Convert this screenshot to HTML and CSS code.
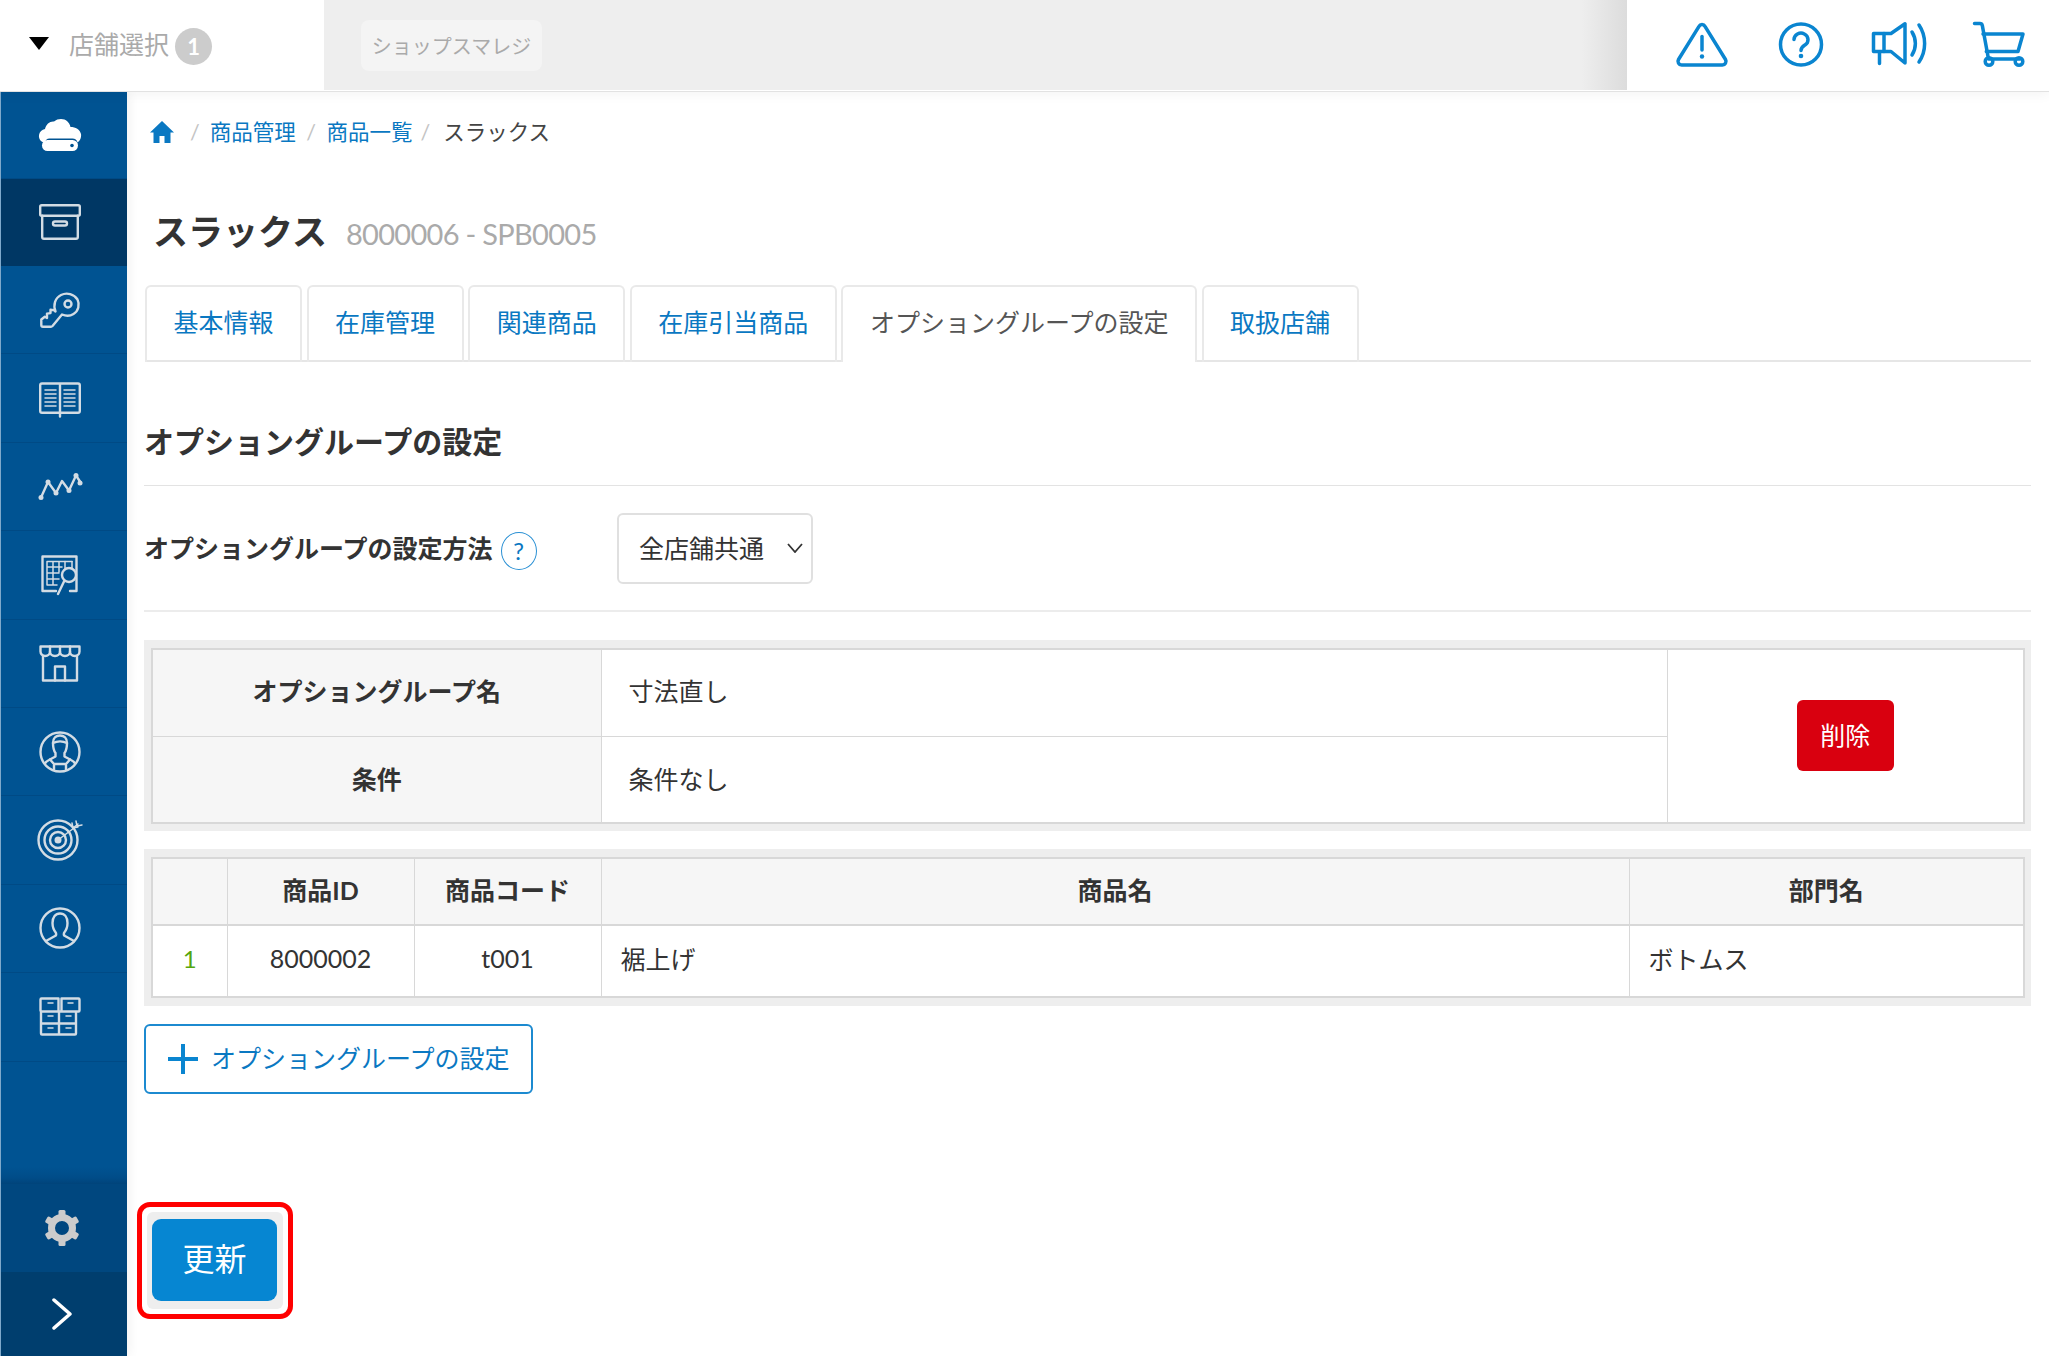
FILE: index.html
```html
<!DOCTYPE html>
<html lang="ja">
<head>
<meta charset="utf-8">
<title>スラックス</title>
<link rel="stylesheet" href="styles.css">
</head>
<body>
<div class="app">
  <header class="topbar">
    <div class="store-select">
      <span class="caret"></span>
      <span class="store-label">店舗選択</span>
      <span class="store-badge">1</span>
    </div>
    <div class="shop-area"><span class="shop-chip">ショップスマレジ</span></div>
    <div class="top-icons">
      <svg class="ti ti-warn" viewBox="0 0 52 45"><path d="M26 2.5c1.3 0 2.4.7 3 1.8L49.500 37.500c1.400 2.400-.3 5.500-3.100 5.500H5.600c-2.800 0-4.500-3.100-3.100-5.500L23 4.300c.6-1.100 1.700-1.800 3-1.800z"/><path d="M26 14.500V28"/><circle class="fillc" cx="26" cy="34.500" r="2.200"/></svg>
      <svg class="ti ti-q" viewBox="0 0 46 45"><circle cx="23" cy="22.500" r="20.500"/><path d="M16 17.500a7 6.500 0 1 1 11 5.500c-2.500 1.600-4 2.500-4 5.500"/><circle class="fillc" cx="23" cy="34" r="2.300"/></svg>
      <svg class="ti ti-mega" viewBox="0 0 58 43"><path d="M1.500 11.500H19L33 1.800V41L19 29.500H1.500z"/><path d="M12 11.500v18M7.500 30v11.500"/><path d="M40 10c4.500 7 4.500 16 0 23M47 3c7.500 11 7.500 26 0 37"/></svg>
      <svg class="ti ti-cart" viewBox="0 0 52 45"><path d="M1.500 1.500H7c1.200 0 2 .7 2.300 1.900L15.500 37H47"/><path d="M10 12h40l-5 17.500H13.300"/><circle cx="16" cy="39.500" r="3.800"/><circle cx="46" cy="39.500" r="3.800"/></svg>
    </div>
  </header>

  <div class="body-row">
    <nav class="sidebar">
      <a class="side-item side-short">
        <svg class="si si-cloud" viewBox="0 0 44 32"><path class="fillc" d="M7 24C2.500 23 .5 19.500 1 16c.5-3.500 3-5.500 6-6 1-5 5-8 9-7.500C18 .8 20.500 0 23 0c5 0 8.500 3.500 9.500 8 5 0 9.500 2.500 10.500 7 .6 3.500-1 7-3.500 8.500-.5-2.500-2.500-4-5-4H11.500C9 19.500 7 21.500 7 24z"/><rect class="fillc" x="4" y="21" width="36" height="11" rx="5.500"/><circle class="dot-hole" cx="34" cy="26.500" r="1.800"/></svg>
      </a>
      <a class="side-item side-short side-active">
        <svg class="si si-box" viewBox="0 0 42 36"><rect x="1.200" y="1.200" width="39.600" height="10.500" rx="1.500"/><path d="M3.200 11.700V33c0 1 .8 1.800 1.800 1.800h32c1 0 1.800-.8 1.800-1.800V11.700"/><rect x="14" y="17.500" width="14" height="4" rx="2"/></svg>
      </a>
      <a class="side-item">
        <svg class="si si-key" viewBox="0 0 40 36"><path d="M15.500 19.500C13 13 15 6 21 3c6-3 13-.8 16.500 4.500 2.500 5 1 11.500-4 14.500-4 2.500-8 2-11.500.5L12.500 34c-.5.5-1 .7-1.500.7H3c-1 0-1.700-.8-1.700-1.700v-5.500l3.500-2.800 2.200 1.200v-4.300l3.500-.5v-3.300l3.500.3z"/><circle cx="28" cy="12" r="3.500"/></svg>
      </a>
      <a class="side-item">
        <svg class="si si-book" viewBox="0 0 42 37"><path d="M21 3.500H3c-1 0-1.800.8-1.800 1.800V31c0 1 .8 1.800 1.800 1.800h36c1 0 1.800-.8 1.800-1.800V5.300c0-1-.8-1.800-1.800-1.800H21v33"/><path class="thin" d="M6 10h11M6 14h11M6 18h11M6 22h11M6 26h11M25 10h11M25 14h11M25 18h11M25 22h11M25 26h11"/></svg>
      </a>
      <a class="side-item">
        <svg class="si si-chart" viewBox="0 0 44 30"><path d="M3 26.500 10 11l8 11 6-12 7 9.500 7-15 5 7.500"/><circle class="fillc" cx="3" cy="26.500" r="2.500"/><circle class="fillc" cx="10" cy="11" r="2.500"/><circle class="fillc" cx="18" cy="22" r="2.500"/><circle class="fillc" cx="31" cy="19.500" r="2.500"/><circle class="fillc" cx="38" cy="4.500" r="2.500"/><circle class="fillc" cx="42" cy="12" r="2.500"/></svg>
      </a>
      <a class="side-item">
        <svg class="si si-report" viewBox="0 0 38 40"><path d="M15 36H1.500V1.500h34V36H29"/><path class="thin" d="M6 6.500h25M6 6.500V30h10M12 6.500V30M18 6.500V17M6 12h15M6 18h12M6 24h12"/><path class="thin" d="M24 6.500v7M31 6.500v6"/><circle cx="28" cy="20" r="7"/><path d="m23 26.500-6 12.500"/></svg>
      </a>
      <a class="side-item">
        <svg class="si si-store" viewBox="0 0 42 37"><path d="M1.500 1.500h39v5c0 2.500-2 4.500-4.800 4.500S31 9 31 6.500c0 2.500-2 4.500-5 4.500s-5-2-5-4.500c0 2.500-2 4.500-5 4.500s-5-2-5-4.500C11 9 9 11 6.200 11S1.500 9 1.500 6.500z"/><path d="M11 1.500v5M21 1.500v5M31 1.500v5"/><path d="M4 11v24.500h34V11"/><path d="M16 35.500V21.500h10v14"/></svg>
      </a>
      <a class="side-item">
        <svg class="si si-person" viewBox="0 0 42 42"><circle cx="21" cy="21" r="19.500"/><path d="M14 12c0-5 3-7.500 7-7.500s7 2.500 7 7.500c0 5-1 8-2.500 10v3.500L32 29c2 1 3.500 2 4 3.500M14 12c0 5 1 8 2.500 10v3.500L10 29c-2 1-3.500 2-4 3.500"/><path d="M14 12c4-2 10-2 14 0"/><path d="M11 28.500 15 33h12l4-4.500M15 33v5M27 33v5"/></svg>
      </a>
      <a class="side-item">
        <svg class="si si-target" viewBox="0 0 46 42"><circle cx="21" cy="21" r="19.500"/><circle cx="21" cy="21" r="13.500"/><circle cx="21" cy="21" r="8"/><circle class="fillc" cx="21" cy="21" r="3.500"/><path class="thin" d="M21 21 37 9"/><path class="thin" d="m35 4 1 5 5-1M39 2l1 5 5-1M36 9l5-4"/></svg>
      </a>
      <a class="side-item">
        <svg class="si si-user" viewBox="0 0 42 42"><circle cx="21" cy="21" r="19.500"/><path d="M7 34l9-5c1-.5 1.500-1.200 1-3-2-2.500-3.500-6-3.500-10 0-6 3-9.500 7.500-9.500S28.500 10 28.500 16c0 4-1.500 7.500-3.500 10-.5 1.800 0 2.500 1 3l9 5"/></svg>
      </a>
      <a class="side-item">
        <svg class="si si-grid" viewBox="0 0 42 39"><path d="M1.500 2.500c0-.6.400-1 1-1h17v13H2.500c-.6 0-1-.4-1-1zM22.500 1.500h17c.6 0 1 .4 1 1v11c0 .6-.4 1-1 1h-17zM2 14.500h18v12H2zM20 14.500h17v12H20zM2 26.500h18v11H3c-.6 0-1-.4-1-1zM20 26.500h17v10c0 .6-.4 1-1 1H20z"/><path class="thin" d="M9 6h5M29 6h5M9 19h5M27 19h5M9 31h5M27 31h5"/></svg>
      </a>
      <div class="side-fill"></div>
      <a class="side-gear">
        <svg class="gear" viewBox="0 0 36 36"><circle class="gear-ring" cx="18" cy="18" r="10.500"/><rect class="gear-tooth" x="14.500" y="0" width="7" height="8" rx="1.500"/><rect class="gear-tooth" x="14.500" y="0" width="7" height="8" rx="1.500" transform="rotate(60 18 18)"/><rect class="gear-tooth" x="14.500" y="0" width="7" height="8" rx="1.500" transform="rotate(120 18 18)"/><rect class="gear-tooth" x="14.500" y="0" width="7" height="8" rx="1.500" transform="rotate(180 18 18)"/><rect class="gear-tooth" x="14.500" y="0" width="7" height="8" rx="1.500" transform="rotate(240 18 18)"/><rect class="gear-tooth" x="14.500" y="0" width="7" height="8" rx="1.500" transform="rotate(300 18 18)"/></svg>
      </a>
      <a class="side-toggle">
        <svg class="chev" viewBox="0 0 20 32"><path d="M2 2l16 14L2 30"/></svg>
      </a>
    </nav>

    <main class="main">
      <ol class="crumbs">
        <li class="crumb-home"><svg class="home" viewBox="0 0 24 22"><path d="M12 0 0 11.500h3.500V22h6v-7h5v7h6V11.500H24z"/></svg></li>
        <li class="sep sep-first">/</li>
        <li><a class="link">商品管理</a></li>
        <li class="sep sep-wide">/</li>
        <li><a class="link">商品一覧</a></li>
        <li class="sep">/</li>
        <li class="crumb-current">スラックス</li>
      </ol>

      <div class="title-row">
        <h1 class="title">スラックス</h1>
        <span class="subtitle">8000006 - SPB0005</span>
      </div>

      <ul class="tabs">
        <li class="tab">基本情報</li>
        <li class="tab">在庫管理</li>
        <li class="tab">関連商品</li>
        <li class="tab">在庫引当商品</li>
        <li class="tab tab-active">オプショングループの設定</li>
        <li class="tab">取扱店舗</li>
      </ul>

      <h2 class="section-title">オプショングループの設定</h2>

      <div class="method-row">
        <div class="method-label">
          <span class="method-text">オプショングループの設定方法</span>
          <span class="help">?</span>
        </div>
        <div class="select-box">
          <span class="select-text">全店舗共通</span>
          <svg class="select-chev" viewBox="0 0 16 10"><path d="M1 1l7 8 7-8"/></svg>
        </div>
      </div>

      <div class="panel panel-first">
        <table class="grid grid-a">
          <colgroup><col class="ca1"><col class="ca2"><col class="ca3"></colgroup>
          <tr>
            <th>オプショングループ名</th>
            <td class="pad-a">寸法直し</td>
            <td class="action" rowspan="2"><button class="btn-delete">削除</button></td>
          </tr>
          <tr class="row-low">
            <th>条件</th>
            <td class="pad-a">条件なし</td>
          </tr>
        </table>
      </div>

      <div class="panel panel-second">
        <table class="grid grid-b">
          <colgroup><col class="cb1"><col class="cb2"><col class="cb2"><col class="cb3"><col class="cb4"></colgroup>
          <tr class="head-row">
            <th></th><th>商品ID</th><th>商品コード</th><th>商品名</th><th>部門名</th>
          </tr>
          <tr class="body-line">
            <td class="num">1</td>
            <td class="center">8000002</td>
            <td class="center">t001</td>
            <td class="pad-b">裾上げ</td>
            <td class="pad-b">ボトムス</td>
          </tr>
        </table>
      </div>

      <button class="btn-add">
        <svg class="plus" viewBox="0 0 30 30"><path d="M15 0v30M0 15h30"/></svg>
        <span>オプショングループの設定</span>
      </button>

      <div class="footer-bar">
        <button class="btn-update">更新</button>
        <span class="annotation"></span>
      </div>
    </main>
  </div>
</div>
</body>
</html>
```
FILE: styles.css
```css
* { box-sizing: border-box; }
html, body { margin: 0; padding: 0; }
body {
  width: 2049px;
  height: 1356px;
  overflow: hidden;
  background: #fff;
  color: #333;
  font-family: Lato, "Noto Sans CJK JP", sans-serif;
  font-size: 25px;
}
.app { display: flex; flex-direction: column; height: 1356px; }

/* top bar */
.topbar {
  display: flex;
  height: 92px;
  flex: none;
  background: #fff;
  border-bottom: 1px solid #e2e2e2;
  position: relative;
  z-index: 2;
  box-shadow: 0 2px 12px rgba(0,0,0,.05);
}
.store-select {
  width: 324px;
  display: flex;
  align-items: center;
  padding-left: 29px;
  padding-bottom: 1px;
}
.caret {
  width: 0; height: 0;
  border-left: 10px solid transparent;
  border-right: 10px solid transparent;
  border-top: 13px solid #000;
  margin-top: -3px;
}
.store-label { margin-left: 20px; color: #aaa; font-size: 25px; line-height: 36px; margin-top: -2px; }
.store-badge {
  width: 37px; height: 37px;
  margin-left: 6px;
  margin-top: 3px;
  border-radius: 50%;
  background: #ccc;
  color: #fff;
  font-weight: 700;
  font-size: 22px;
  display: flex;
  align-items: center;
  justify-content: center;
}
.shop-area {
  flex: 1;
  height: 90px;
  background: linear-gradient(to right, #eee 0, #eee 96.500%, #dcdcdc 100%);
  padding: 20px 0 0 37px;
}
.shop-chip {
  display: flex;
  align-items: center;
  justify-content: center;
  width: 181px;
  height: 51px;
  background: #f4f4f4;
  border-radius: 8px;
  color: #aaa;
  font-size: 20px;
}
.top-icons { width: 422px; position: relative; display: flex; align-items: flex-start; padding-top: 22px; }
.ti { fill: none; stroke: #0a85d0; stroke-width: 3.500; stroke-linecap: round; stroke-linejoin: round; flex: none; overflow: visible; }
.ti .fillc { fill: #0a85d0; stroke: none; }
.ti-warn { width: 52px; height: 45px; margin-left: 49px; }
.ti-q { width: 46px; height: 45px; margin-left: 50px; }
.ti-mega { width: 58px; height: 43px; margin-left: 48px; }
.ti-cart { width: 52px; height: 45px; margin-left: 43px; }

/* sidebar */
.body-row { display: flex; flex: 1; min-height: 0; }
.sidebar {
  width: 127px;
  flex: none;
  display: flex;
  flex-direction: column;
  background: #005392;
  border-left: 1px solid #7fa9cb;
  box-shadow: 3px 0 10px rgba(0,0,0,.05);
}
.side-item {
  height: 88.400px;
  flex: none;
  display: flex;
  align-items: center;
  justify-content: center;
  padding-right: 8px;
  border-bottom: 1px solid #004a85;
}
.side-short { height: 87px; }
.side-active { background: #003764; border-bottom-color: #003764; }
.side-fill { flex: 1; background: linear-gradient(to bottom, #005392 0, #005392 86%, #004c88 95%, #00437a 100%); }
.side-gear { height: 88px; flex: none; background: #00477f; display: flex; align-items: center; justify-content: center; padding-right: 4px; }
.side-toggle { height: 84px; flex: none; background: #003e6e; display: flex; align-items: center; justify-content: center; padding-right: 4px; }
.si { fill: none; stroke: #d3dce4; stroke-width: 2.400; stroke-linecap: round; stroke-linejoin: round; overflow: visible; }
.si .fillc { fill: #fff; stroke: none; }
.si .thin { stroke-width: 1.500; }
.si .dot-hole { fill: #005392; stroke: none; }
.si-cloud { width: 44px; height: 32px; }
.si-box { width: 42px; height: 36px; }
.si-key { width: 40px; height: 36px; }
.si-book { width: 42px; height: 37px; }
.si-chart { width: 44px; height: 30px; }
.si-report { width: 38px; height: 40px; }
.si-store { width: 42px; height: 37px; }
.si-person, .si-user { width: 42px; height: 42px; }
.si-target { width: 46px; height: 42px; }
.si-grid { width: 42px; height: 39px; }
.si-chart .fillc, .si-target .fillc { fill: #d3dce4; }
.gear { width: 36px; height: 36px; }
.gear-ring { fill: none; stroke: #ccc; stroke-width: 7; }
.gear-tooth { fill: #ccc; }
.chev { width: 20px; height: 32px; fill: none; stroke: #fff; stroke-width: 3.500; stroke-linecap: round; stroke-linejoin: round; }

/* main */
.main { flex: 1; min-width: 0; padding: 23px 18px 0 17px; }
.crumbs {
  list-style: none;
  margin: 0 0 0 6px;
  padding: 0;
  display: flex;
  align-items: center;
  height: 34px;
  font-size: 21.500px;
  line-height: 34px;
}
.home { width: 24px; height: 22px; fill: #0a78c2; display: block; }
.sep { color: #c4c4c4; margin: 0 8px; }
.sep-first { margin: 0 10px 0 16px; }
.sep-wide { margin: 0 10.500px; }
.link { color: #0a78c2; }
.crumb-current { color: #444; margin-left: 5px; }
.title-row { display: flex; align-items: center; height: 50px; margin-top: 57px; padding-left: 9px; }
.title { margin: 0; font-size: 35px; font-weight: 700; line-height: 50px; color: #333; }
.subtitle { margin-left: 19px; color: #aaa; font-size: 29px; letter-spacing: -.700px; line-height: 50px; margin-top: 6px; }
.tabs {
  list-style: none;
  display: flex;
  gap: 4.600px;
  margin: 29px 0 0 1px;
  padding: 0;
  border-bottom: 2px solid #e6e6e6;
  height: 77px;
}
.tab {
  height: 77px;
  padding: 0 26.500px;
  border: 2px solid #e9e9e9;
  border-bottom: 0;
  border-radius: 6px 6px 0 0;
  color: #0a78c2;
  line-height: 70px;
  font-size: 25px;
  white-space: nowrap;
}
.tab-active { color: #555; background: #fff; height: 77px; }
.section-title {
  margin: 60px 0 0;
  padding-bottom: 25px;
  height: 64px;
  font-size: 30px;
  line-height: 38px;
  font-weight: 700;
  color: #333;
  border-bottom: 1px solid #e3e3e3;
}
.method-row {
  display: flex;
  align-items: center;
  height: 126px;
  border-bottom: 2px solid #ececec;
}
.method-label { width: 473px; display: flex; align-items: center; font-weight: 700; font-size: 25px; }
.method-text { padding-bottom: 3px; }
.help {
  width: 36px; height: 38px;
  margin-left: 8px;
  margin-top: 5px;
  border: 1.500px solid #2a90d4;
  border-radius: 50%;
  color: #0a78c2;
  font-weight: 400;
  font-size: 24px;
  display: flex;
  align-items: center;
  justify-content: center;
}
.select-box {
  width: 196px;
  height: 71px;
  border: 2px solid #e0e0e0;
  border-radius: 6px;
  display: flex;
  align-items: center;
  justify-content: space-between;
  padding: 0 8px 0 20px;
  color: #333;
}
.select-text { padding-bottom: 2px; }
.select-chev { width: 16px; height: 10px; fill: none; stroke: #333; stroke-width: 1.800; }

.panel { background: #eee; padding: 8px 8px 8px 7px; }
.panel-first { margin-top: 28px; height: 191px; }
.panel-second { margin-top: 18px; height: 157px; }
.grid {
  width: 1872px;
  table-layout: fixed;
  border-collapse: collapse;
  border: 2px solid #d8d8d8;
  background: #fff;
}
.grid th, .grid td { border: 1px solid #d8d8d8; padding: 0 0 6px; }
.grid th { background: #f6f6f6; font-weight: 700; text-align: center; color: #333; }
.grid-a { height: 175px; }
.grid-a th { height: 87px; }
.grid .row-low th, .grid .row-low td { padding-bottom: 3px; }
.ca1 { width: 449px; }
.ca2 { width: 1066px; }
.ca3 { width: 357px; }
.cb1 { width: 75px; }
.cb2 { width: 187px; }
.cb3 { width: 1028px; }
.cb4 { width: 395px; }
.grid-b { height: 141px; }
.head-row th { height: 67px; border-bottom-width: 2px; }
.grid .pad-a { padding-left: 27px; }
.grid .pad-b { padding-left: 19px; }
.center { text-align: center; }
.grid .num { text-align: center; color: #55a60e; font-size: 24px; }
.grid .action { text-align: center; padding: 0 0 2px; }
.btn-delete {
  display: block;
  width: 97px;
  height: 71px;
  margin: 0 auto;
  border: 0;
  border-radius: 6px;
  background: #d9000f;
  color: #fff;
  font: inherit;
  padding: 0 0 2px;
}
.btn-add {
  margin-top: 18px;
  width: 389px;
  height: 70px;
  display: flex;
  align-items: center;
  padding: 0 0 5px 22px;
  background: #fff;
  border: 2px solid #1c8ad0;
  border-radius: 6px;
  color: #0a78c2;
  font: inherit;
}
.plus { width: 30px; height: 30px; fill: none; stroke: #0a85d0; stroke-width: 4; flex: none; margin-right: 13px; margin-bottom: -5px; }
.footer-bar {
  position: relative;
  width: 136px;
  height: 97px;
  margin: 118px 0 0 3px;
  padding: 7px 6px 8px 5px;
  background: #eee;
  border-radius: 6px;
}
.btn-update {
  display: block;
  width: 125px;
  height: 82px;
  border: 0;
  border-radius: 9px;
  background: #0686d2;
  color: #fff;
  font: inherit;
  font-size: 32px;
  padding: 0 0 6px;
}
.annotation {
  position: absolute;
  inset: -10px;
  border: 5px solid #f00;
  border-radius: 13px;
}
```
